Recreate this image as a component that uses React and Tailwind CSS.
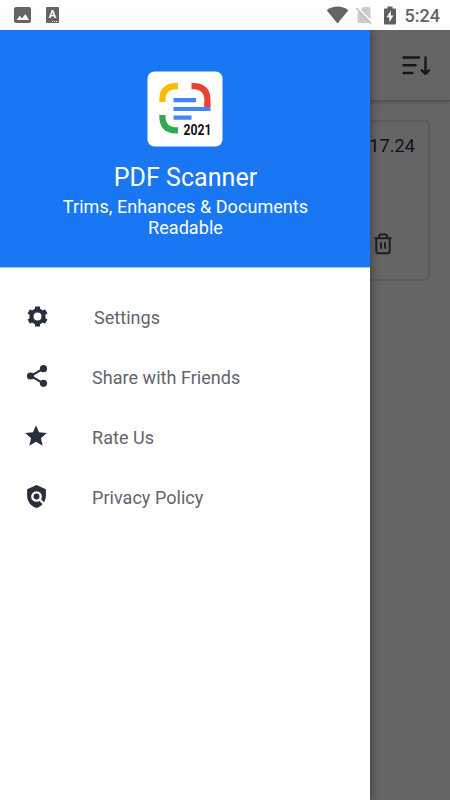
import { MdStar } from 'react-icons/md';

const GearIcon = ({ className }) => (
  <svg className={className} viewBox="0 0 24 24" fill="none" stroke="currentColor">
    <circle cx="12" cy="12" r="5.8" strokeWidth="4" />
    <path d="M12 2.3V5.5M12 18.5V21.7M3.6 7.15 6.4 8.75M17.6 15.25 20.4 16.85M3.6 16.85 6.4 15.25M17.6 8.75 20.4 7.15" strokeWidth="4.8" />
  </svg>
);

const ShareIcon = ({ className }) => (
  <svg className={className} viewBox="0 0 24 24" fill="currentColor">
    <path d="M18 5.2 6 12 18 18.8" fill="none" stroke="currentColor" strokeWidth="2" />
    <circle cx="18" cy="5.2" r="3.3" />
    <circle cx="6" cy="12" r="3.3" />
    <circle cx="18" cy="18.8" r="3.3" />
  </svg>
);

const PolicyIcon = ({ className }) => (
  <svg className={className} viewBox="0 0 24 24">
    <path d="M12 1 21 5V11C21 16.6 17.2 21.7 12 23 6.8 21.7 3 16.6 3 11V5Z" fill="currentColor" />
    <circle cx="12" cy="12" r="4" fill="none" stroke="#fff" strokeWidth="2.3" />
    <path d="M14.7 14.7 19.6 19.6" stroke="#fff" strokeWidth="2.2" />
  </svg>
);

const menuItems = [
  { label: 'Settings', icon: GearIcon, iconClass: 'ml-[25px] mt-[17px] size-[25px]', labelClass: 'left-[94px]' },
  { label: 'Share with Friends', icon: ShareIcon, iconClass: 'ml-[23.5px] mt-[15.5px] size-[26px]', labelClass: 'left-[92px]' },
  { label: 'Rate Us', icon: MdStar, iconClass: 'ml-[23px] mt-4 size-[26px]', labelClass: 'left-[92px]' },
  { label: 'Privacy Policy', icon: PolicyIcon, iconClass: 'ml-6 mt-[17px] size-[25px]', labelClass: 'left-[92px]' }
];

const StatusBar = () => (
  <div className="h-[30px] bg-[#fdfdfd] flex items-center justify-between">
    <div className="flex items-center gap-[15px] pl-[14px]">
      <svg className="w-[17px] h-4" viewBox="0 0 17 16">
        <rect width="17" height="16" rx="2" fill="#646464" />
        <path d="M2.5 13 5.7 8.8 8 11.4 11.3 7 15 13Z" fill="#fdfdfd" />
      </svg>
      <div className="relative w-[13px] h-4 rounded-[1px] bg-[#646464] text-white text-[11px] leading-[15px] font-bold text-center">
        A
        <div className="absolute right-0.5 bottom-px w-[5px] border-b border-dotted border-white" />
      </div>
    </div>
    <div className="flex items-center pr-[10px]">
      <svg className="w-[23px] h-[18px] mr-[7px]" viewBox="0 0 23 18">
        <path d="M0.7 4.2C7 -0.7 16 -0.7 22.3 4.2L11.5 17.4Z" fill="#646464" />
      </svg>
      <svg className="w-4 h-[18px] mr-3" viewBox="0 0 16 18">
        <path d="M7.5 1H13Q14.5 1 14.5 2.5V17H3Q1.5 17 1.5 15.5V7Z" fill="#cbcbcb" />
        <path d="M1 0.8 16 16.5" stroke="#fdfdfd" strokeWidth="1.6" />
        <path d="M0 2 15 17.5" stroke="#bdbdbd" strokeWidth="1.5" />
      </svg>
      <svg className="w-3 h-[19px] mr-[9px]" viewBox="0 0 12 19">
        <path d="M3.5 0.5H8.5V2.5H11Q12 2.5 12 3.5V17.5Q12 18.5 11 18.5H1Q0 18.5 0 17.5V3.5Q0 2.5 1 2.5H3.5Z" fill="#5f5f5f" />
        <path d="M6.8 4.5 2.7 11.3H5.3V16.3L9.4 9.4H6.8Z" fill="#fdfdfd" />
      </svg>
      <span className="text-[18px] leading-[30px] font-medium text-[#636363] pt-px">5:24</span>
    </div>
  </div>
);

const Logo = () => (
  <svg className="size-[76px]" viewBox="0 0 76 76">
    <rect x="0.5" y="0.5" width="75" height="75" rx="7" fill="#fff" />
    <g fill="none" strokeWidth="6.2">
      <path d="M15.4 31V29Q15.4 15.1 29 15.1H31" stroke="#fabb05" />
      <path d="M44.5 15.1H46Q60.4 15.1 60.4 29V35" stroke="#e94235" />
      <path d="M15.4 44V45Q15.4 59.3 29 59.3H31" stroke="#34a853" />
    </g>
    <path d="M26.5 27H49V31.3H26.5ZM26.5 36H63.5V40H26.5ZM26.5 44.5H44.5V48.8H26.5Z" fill="#4285f4" />
    <path d="M57.3 33H63.5V36H57.3Z" fill="#e94235" />
    <text x="36.5" y="63.7" textLength="28" lengthAdjust="spacingAndGlyphs" fontSize="14.5" fontWeight="700" fill="#111">2021</text>
  </svg>
);

const DocumentsPage = () => (
  <div className="grow bg-[#656565] text-[#0b121a]">
    <div className="h-[71px] flex items-center justify-end pr-5 pt-px border-b border-[#505050] shadow-[0_2px_3px_rgba(0,0,0,0.15)]">
      <svg className="w-[30px] h-6" viewBox="0 0 30 24" fill="none" stroke="#14181d" strokeWidth="2.4" strokeLinecap="round" strokeLinejoin="round">
        <path d="M3.5 3.5H19M3.5 11.2H15.5M3.5 19H12.5M25.5 3.5V19.8M21.8 16.3 25.5 19.8 29 16.3" />
      </svg>
    </div>
    <div className="mx-5 mt-[19px] h-[161px] rounded-[5px] border-2 border-[#5b5b5b] flex flex-col items-end">
      <div className="mt-3 mr-[13px] text-[18px] leading-6 tracking-[0.1px]">Doc 01.17.24</div>
      <svg className="w-5 h-[23px] mt-[74px] mr-[35px]" viewBox="0 0 20 23" fill="none" stroke="#1c2024" strokeWidth="2" strokeLinejoin="round">
        <path d="M1.5 6.2H18.5M3.3 6.2V19.3Q3.3 21.3 5 21.3H15Q16.7 21.3 16.7 19.3V6.2M6 6V4.2Q6 2.5 7.7 2.5H12.3Q14 2.5 14 4.2V6M8 10.3V16.7M12 10.3V16.7" />
      </svg>
    </div>
  </div>
);

const MenuItem = ({ label, icon: Icon, iconClass, labelClass }) => (
  <div className="relative h-[60px]">
    <div className="flex">
      <Icon className={`${iconClass} text-[#282f3d]`} />
    </div>
    <span className={`absolute top-[19px] text-[18px] leading-6 tracking-[0.04px] text-[#62656d] whitespace-nowrap ${labelClass}`}>{label}</span>
  </div>
);

const Drawer = () => (
  <div className="absolute left-0 top-[30px] bottom-0 w-[450px] overflow-hidden">
    <div className="w-[370px] h-full bg-white shadow-[1px_0_9px_rgba(0,0,0,0.4)]">
      <div className="h-[237px] bg-[#1977f3] pt-[41px] flex flex-col items-center text-center text-white">
        <Logo />
        <div className="mt-4 pl-px text-[25px] leading-[30px] tracking-[0.05px]">PDF Scanner</div>
        <div className="mt-[3px] pl-px w-[270px] text-[18px] leading-[21px] tracking-[0.06px]">Trims, Enhances &amp; Documents Readable</div>
      </div>
      <div className="h-px bg-[#a3c8fa]" />
      <div className="pt-[19px]">
        {menuItems.map((item) => (
          <MenuItem key={item.label} {...item} />
        ))}
      </div>
    </div>
  </div>
);

export default function App() {
  return (
    <div className="relative w-[450px] h-[800px] overflow-hidden flex flex-col font-[Roboto,sans-serif]">
      <StatusBar />
      <DocumentsPage />
      <Drawer />
    </div>
  );
}
